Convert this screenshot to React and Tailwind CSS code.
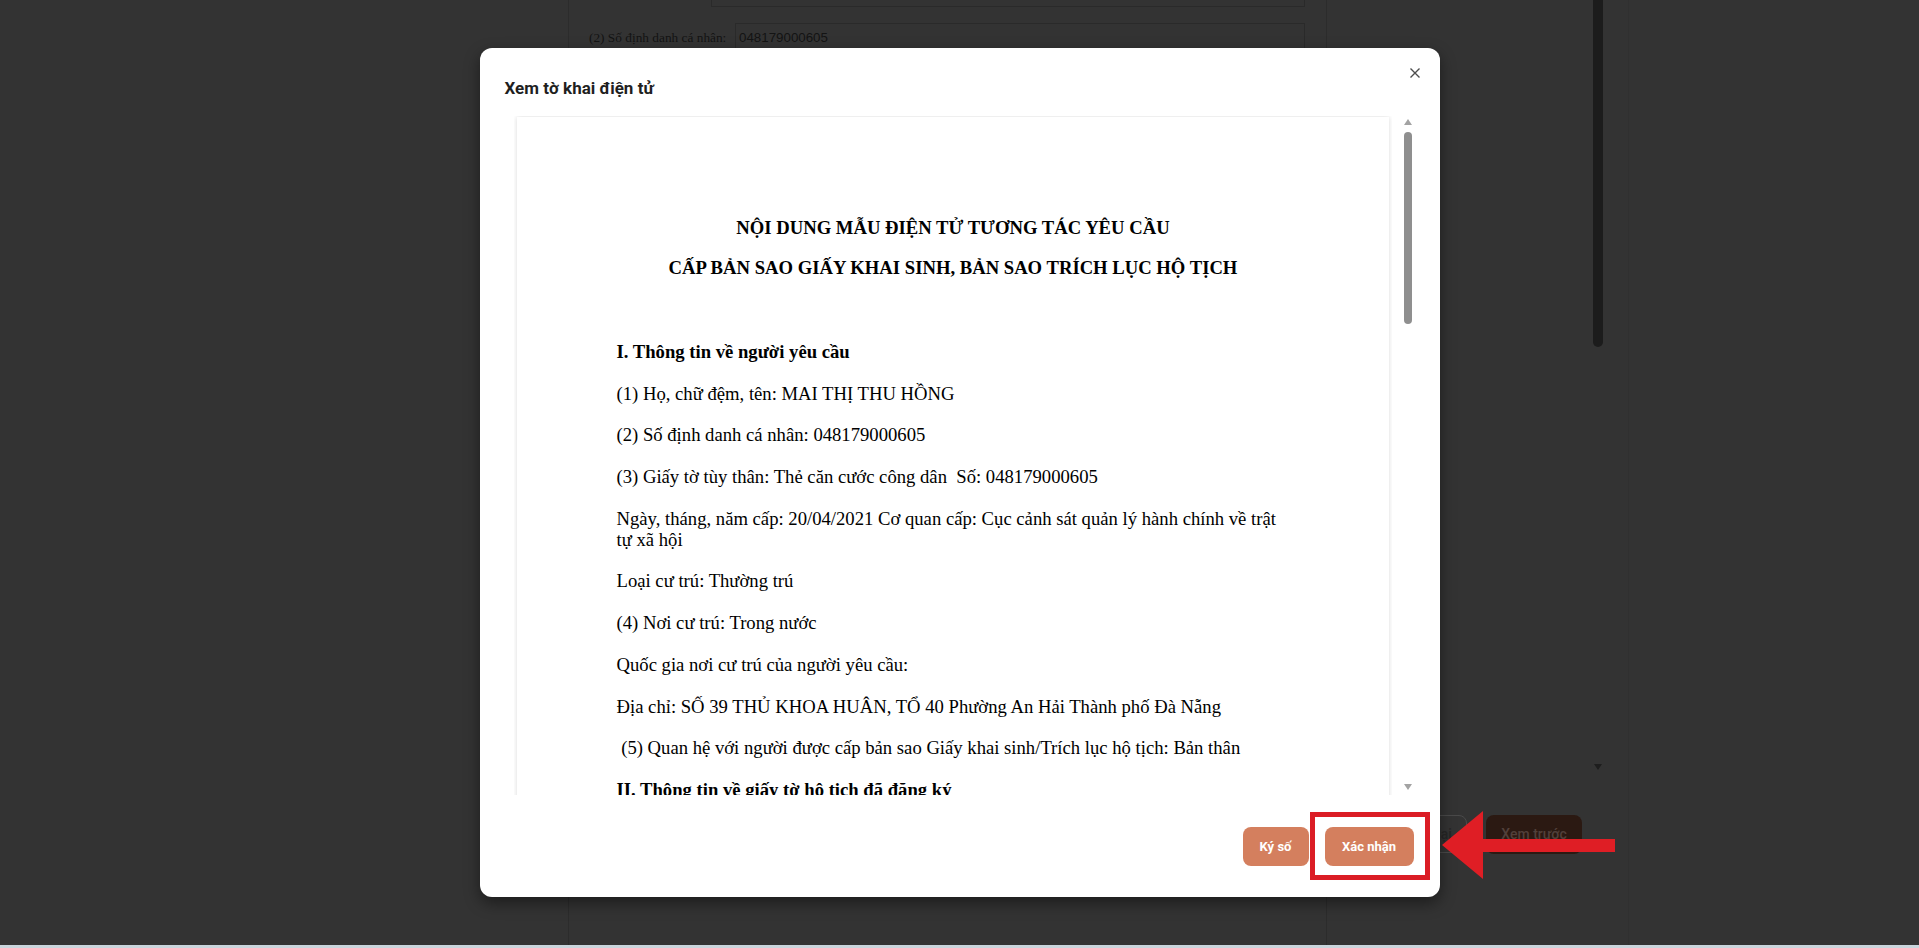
import { useState } from 'react'

const serif = "font-['Liberation_Serif','Times_New_Roman',serif]"

const paragraphs = [
  { text: 'I. Thông tin về người yêu cầu', bold: true },
  { text: '(1) Họ, chữ đệm, tên: MAI THỊ THU HỒNG' },
  { text: '(2) Số định danh cá nhân: 048179000605' },
  { text: '(3) Giấy tờ tùy thân: Thẻ căn cước công dân\u00a0 Số: 048179000605' },
  { text: 'Ngày, tháng, năm cấp: 20/04/2021 Cơ quan cấp: Cục cảnh sát quản lý hành chính về trật tự xã hội' },
  { text: 'Loại cư trú: Thường trú' },
  { text: '(4) Nơi cư trú: Trong nước' },
  { text: 'Quốc gia nơi cư trú của người yêu cầu:' },
  { text: 'Địa chỉ: SỐ 39 THỦ KHOA HUÂN, TỔ 40 Phường An Hải Thành phố Đà Nẵng' },
  { text: '\u00a0(5) Quan hệ với người được cấp bản sao Giấy khai sinh/Trích lục hộ tịch: Bản thân' },
  { text: 'II. Thông tin về giấy tờ hộ tịch đã đăng ký', bold: true },
]

function BackgroundPage() {
  return (
    <div className="flex h-[945px]">
      <div className="w-[568px] shrink-0" />
      <div className="h-full w-[759px] shrink-0 border-x border-[#2c2c2c]">
        <div className="ml-[142px] mr-[21px] h-[7px] border-x border-b border-[#2a2a2a]" />
        <div className="mt-[16px] flex items-start">
          <div className={`${serif} w-[166px] shrink-0 pl-[20px] pt-[7px] text-[13.33px] leading-[16px] text-[#141414]`}>
            (2) Số định danh cá nhân:
          </div>
          <div className="mr-[21px] h-[30px] flex-1 border border-[#2a2a2a] pl-[3px] font-['Liberation_Sans',Arial,sans-serif] text-[13.33px] leading-[28px] text-[#141414]">
            048179000605
          </div>
        </div>
      </div>
      <div className="flex flex-1">
        <div className="flex w-[266px] shrink-0 flex-col justify-end pb-[91px]">
          <div className="flex justify-end gap-[19px] pr-[11px]">
            <div className="flex h-[38px] w-[80px] items-center justify-center rounded-[8px] border border-[#4a4a4a] text-[14px] font-medium text-[#262626]">
              Quay lại
            </div>
            <div className="flex h-[39px] w-[96px] items-center justify-center rounded-[8px] bg-[#2b1912] text-[14px] font-medium text-[#52403a]">
              Xem trước
            </div>
          </div>
        </div>
        <div className="flex w-[10px] shrink-0 flex-col items-center">
          <div className="h-[347px] w-[10px] rounded-b-full bg-[#1c1c1c]" />
          <div className="mt-[417px] h-0 w-0 border-x-[4px] border-t-[6px] border-x-transparent border-t-[#1e1e1e]" />
        </div>
        <div className="ml-[25px] flex-1 border-l border-[#303030]" />
      </div>
    </div>
  )
}

function DocPage() {
  return (
    <div className={`${serif} h-[700px] w-[872px] bg-white pl-[100px] pr-[99px] pt-[99px] text-black shadow-[0_0_5px_rgba(0,0,0,0.15)]`}>
      <p className="text-center text-[18.67px] font-bold leading-[24px]">NỘI DUNG MẪU ĐIỆN TỬ TƯƠNG TÁC YÊU CẦU</p>
      <p className="mt-[16px] text-center text-[18.67px] font-bold leading-[24px]">
        CẤP BẢN SAO GIẤY KHAI SINH, BẢN SAO TRÍCH LỤC HỘ TỊCH
      </p>
      <div className="mt-[61px]">
        {paragraphs.map((p, i) => (
          <p key={i} className={`mb-[20.7px] text-[18.67px] leading-[21px] ${p.bold ? 'font-bold' : ''}`}>
            {p.text}
          </p>
        ))}
      </div>
    </div>
  )
}

function Scrollbar() {
  return (
    <div className="flex w-[16px] shrink-0 flex-col items-center pt-[3px]">
      <div className="h-0 w-0 border-x-[4px] border-b-[6px] border-x-transparent border-b-[#a3a3a3]" />
      <div className="mt-[7px] h-[192px] w-[8px] rounded-full bg-[#8f8f8f]" />
      <div className="flex-1" />
      <div className="mb-[5px] h-0 w-0 border-x-[4px] border-t-[6px] border-x-transparent border-t-[#a3a3a3]" />
    </div>
  )
}

function Modal() {
  const [open, setOpen] = useState(true)
  if (!open) return null

  return (
    <div className="relative flex h-[849px] w-[960px] flex-col rounded-[12px] bg-white shadow-[0_6px_16px_rgba(0,0,0,0.45)]">
      <button
        type="button"
        onClick={() => setOpen(false)}
        className="absolute right-[15px] top-[15px] flex h-[20px] w-[20px] items-center justify-center text-[#4d4d4d]"
      >
        <svg width="10" height="10" viewBox="0 0 10 10" fill="none" stroke="currentColor" strokeWidth="1.4">
          <path d="M0.5 0.5 9.5 9.5M9.5 0.5 0.5 9.5" />
        </svg>
      </button>

      <div className="h-[68px] shrink-0 pl-[25px] pt-[30px]">
        <h2 className="text-[17px] font-bold leading-[20px] text-[#1f1f1f]">Xem tờ khai điện tử</h2>
      </div>

      <div className="ml-[34px] mr-[24px] flex h-[679px] shrink-0">
        <div className="h-full w-[878px] shrink-0 overflow-hidden pl-[3px] pt-[1px]">
          <DocPage />
        </div>
        <div className="w-[8px] shrink-0" />
        <Scrollbar />
      </div>

      <div className="mt-[32px] flex justify-end gap-[16px] pr-[26px]">
        <button
          type="button"
          className="h-[39px] w-[66px] rounded-[8px] bg-[#d47f5e] text-[13px] font-bold text-white"
        >
          Ký số
        </button>
        <button
          type="button"
          className="h-[39px] w-[89px] rounded-[8px] bg-[#d47f5e] text-[13px] font-bold text-white"
        >
          Xác nhận
        </button>
      </div>
    </div>
  )
}

export default function App() {
  return (
    <div className="relative h-[948px] w-full overflow-hidden bg-[#333333] font-['Roboto',sans-serif]">
      <BackgroundPage />
      <div className="h-[3px] bg-[#cad5dc]" />

      <div className="absolute inset-0 flex justify-center pt-[48px]">
        <Modal />
      </div>

      {/* red callout drawn over the screenshot */}
      <div className="pointer-events-none absolute left-[1310px] top-[812px] h-[68px] w-[120px] border-[5px] border-[#db1d25]" />
      <svg
        className="pointer-events-none absolute left-[1440px] top-[808px]"
        width="178"
        height="74"
        viewBox="0 0 178 74"
      >
        <polygon points="2,37 43,3 43,31 175,31 175,44 43,44 43,71" fill="#df1e25" />
      </svg>
    </div>
  )
}
